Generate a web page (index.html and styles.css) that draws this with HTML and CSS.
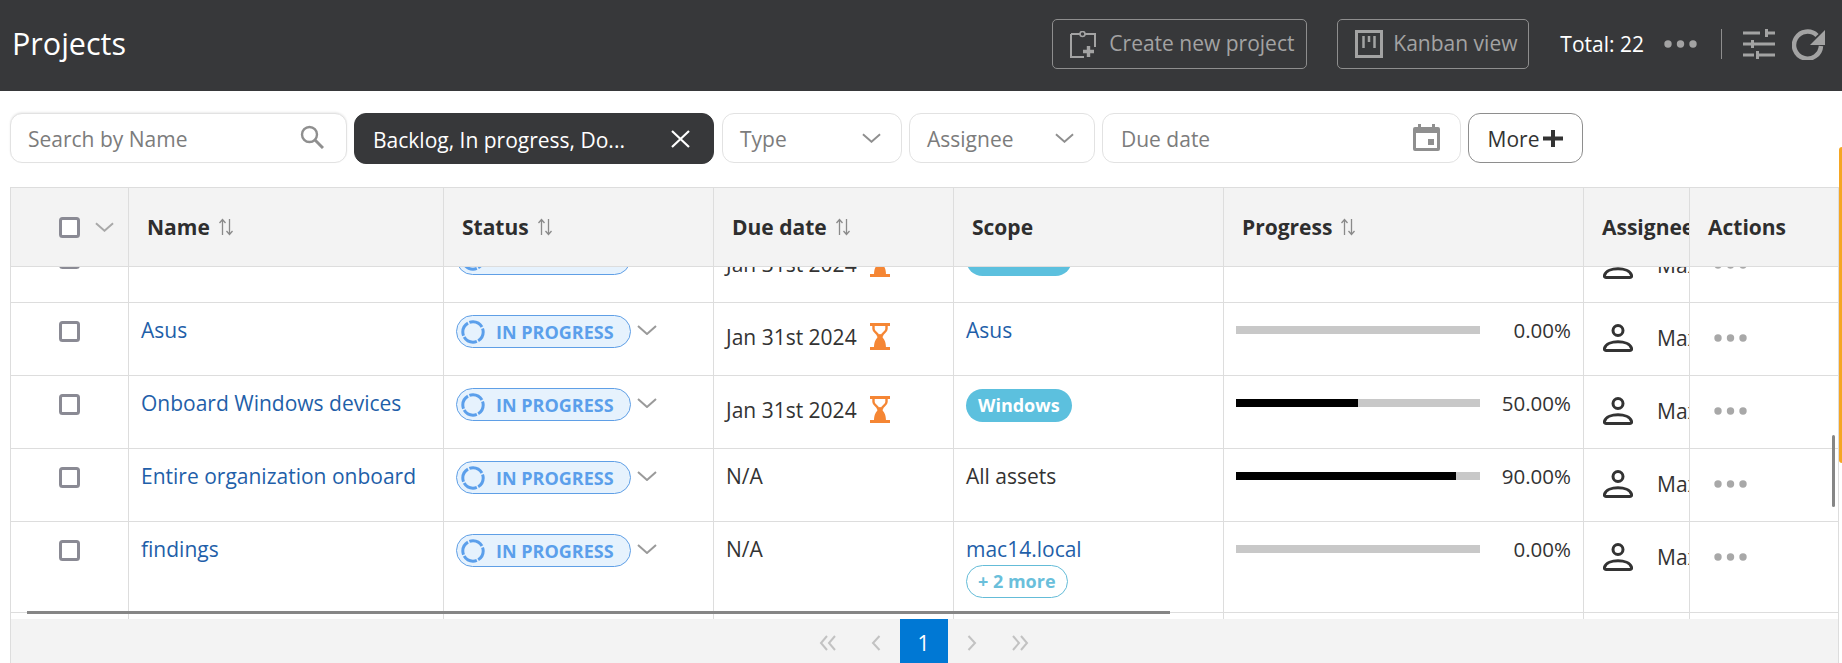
FILE: index.html
```html
<!DOCTYPE html>
<html lang="en">
<head>
<meta charset="utf-8">
<title>Projects</title>
<link rel="stylesheet" href="styles.css">
</head>
<body>
<svg class="defs" width="0" height="0" aria-hidden="true">
  <symbol id="i-chev" viewBox="0 0 20 10"><path d="M1 1l9 8 9-8" fill="none" stroke="currentColor" stroke-width="2"/></symbol>
  <symbol id="i-check" viewBox="0 0 21 21"><rect x="1.500" y="1.500" width="18" height="18" rx="2" fill="#fff" stroke="currentColor" stroke-width="3"/></symbol>
  <symbol id="i-sort" viewBox="0 0 16 18"><path d="M4.500 17V2M1.500 5l3-3.500 3 3.500M11.500 1v15M8.500 13l3 3.500 3-3.500" fill="none" stroke="currentColor" stroke-width="1.300"/></symbol>
  <symbol id="i-prog" viewBox="0 0 24 24"><circle cx="12" cy="12" r="10.200" fill="none" stroke="currentColor" stroke-width="3" stroke-dasharray="14.500 1.520" stroke-dashoffset="4"/></symbol>
  <symbol id="i-glass" viewBox="0 0 20 27"><path d="M0 0h20v3H0zM0 24h20v3H0z" fill="currentColor"/><path d="M3.500 2v4c0 3 4 4 4.500 6.500h4c.5-2.500 4.500-3.500 4.500-6.500V2" fill="none" stroke="currentColor" stroke-width="2.400"/><path d="M10 11.500c1.800 0 2 2 3 3.500 1.500 2 3 4 3 10H4c0-6 1.500-8 3-10 1-1.500 1.200-3.500 3-3.500z" fill="currentColor"/></symbol>
  <symbol id="i-user" viewBox="0 0 30 28"><circle cx="15" cy="6.500" r="5" fill="none" stroke="currentColor" stroke-width="3"/><path d="M3 26.500c-1.500 0-1.800-1-1.500-2.300C2.800 19.800 9 17.800 15 17.800s12.200 2 13.500 6.400c.3 1.300 0 2.300-1.500 2.300z" fill="none" stroke="currentColor" stroke-width="3"/></symbol>
  <symbol id="i-dots" viewBox="0 0 33 8"><circle cx="4" cy="4" r="3.700" fill="currentColor"/><circle cx="16.500" cy="4" r="3.700" fill="currentColor"/><circle cx="29" cy="4" r="3.700" fill="currentColor"/></symbol>
</svg>

<header class="topbar">
  <h1 class="title">Projects</h1>
  <div class="top-actions">
    <button class="ghost-btn create">
      <svg class="btn-ico" viewBox="0 0 26 27" width="26" height="27"><path d="M1 3h24v13M1 3v23h13" fill="none" stroke="currentColor" stroke-width="2"/><circle cx="12.500" cy="3" r="2.500" fill="#37383a" stroke="currentColor" stroke-width="1.600"/><path d="M18.500 15v11M13 20.500h11" fill="none" stroke="currentColor" stroke-width="3.400"/></svg>
      <span>Create new project</span>
    </button>
    <button class="ghost-btn kanban">
      <svg class="btn-ico" viewBox="0 0 28 28" width="28" height="28"><rect x="1.500" y="1.500" width="25" height="25" fill="none" stroke="currentColor" stroke-width="3"/><path d="M8.500 6v12M14 6v6M19.500 6v12" fill="none" stroke="currentColor" stroke-width="2.500"/></svg>
      <span>Kanban view</span>
    </button>
    <span class="total">Total: 22</span>
    <svg class="top-dots" width="33" height="8"><use href="#i-dots"/></svg>
    <span class="divider"></span>
    <svg class="sliders" viewBox="0 0 32 30" width="32" height="30"><path d="M0 4h17M25 4h7M0 15h8M11 15h21M0 26h11M16 26h16" fill="none" stroke="currentColor" stroke-width="3"/><path d="M23.500 0v8M9.500 11v8M14.500 22v8" fill="none" stroke="currentColor" stroke-width="3"/></svg>
    <svg class="refresh" viewBox="0 0 33 31" width="33" height="31"><path d="M25 6.500A13.500 13.500 0 1 0 29 17" fill="none" stroke="currentColor" stroke-width="4.500"/><path d="M33 1v15H18z" fill="currentColor"/></svg>
  </div>
</header>

<section class="filters">
  <div class="field search"><span>Search by Name</span>
    <svg viewBox="0 0 24 24" width="24" height="24"><circle cx="9.500" cy="9.500" r="7.500" fill="none" stroke="currentColor" stroke-width="2.400"/><path d="M15 15l8 8" stroke="currentColor" stroke-width="3"/></svg>
  </div>
  <div class="field chip"><span>Backlog, In progress, Do...</span>
    <svg viewBox="0 0 19 18" width="19" height="18"><path d="M1 1l17 16M18 1L1 17" stroke="currentColor" stroke-width="2.200"/></svg>
  </div>
  <div class="field type"><span>Type</span><svg class="chev" width="19" height="10"><use href="#i-chev"/></svg></div>
  <div class="field assignee"><span>Assignee</span><svg class="chev" width="19" height="10"><use href="#i-chev"/></svg></div>
  <div class="field due"><span>Due date</span>
    <svg viewBox="0 0 27 27" width="27" height="27"><path d="M5 0h3v3h11V0h3v3h3a2 2 0 0 1 2 2v20a2 2 0 0 1-2 2H2a2 2 0 0 1-2-2V5a2 2 0 0 1 2-2h3z" fill="currentColor"/><rect x="3" y="9" width="21" height="15" fill="#fff"/><rect x="15" y="15" width="6" height="6" fill="currentColor"/></svg>
  </div>
  <button class="more"><span>More</span><svg viewBox="0 0 20 17" width="20" height="17"><path d="M0 8.500h20M10 0v17" stroke="currentColor" stroke-width="4"/></svg></button>
</section>

<section class="table">
  <div class="row head">
    <div class="cell c-check">
      <svg class="check" width="21" height="21"><use href="#i-check"/></svg>
      <svg class="head-chev" width="19" height="10"><use href="#i-chev"/></svg>
    </div>
    <div class="cell">Name<svg class="sort" width="16" height="18"><use href="#i-sort"/></svg></div>
    <div class="cell">Status<svg class="sort" width="16" height="18"><use href="#i-sort"/></svg></div>
    <div class="cell">Due date<svg class="sort" width="16" height="18"><use href="#i-sort"/></svg></div>
    <div class="cell">Scope</div>
    <div class="cell">Progress<svg class="sort" width="16" height="18"><use href="#i-sort"/></svg></div>
    <div class="cell c-clip">Assignee</div>
    <div class="cell">Actions</div>
  </div>

  <div class="body">
    <div class="rows">
      <div class="row first">
        <div class="cell c-check"><svg class="check" width="21" height="21"><use href="#i-check"/></svg></div>
        <div class="cell c-name"><a>Onboard devices</a></div>
        <div class="cell c-status"><span class="pill"><svg width="24" height="24"><use href="#i-prog"/></svg>IN PROGRESS</span><svg class="chev" width="20" height="10"><use href="#i-chev"/></svg></div>
        <div class="cell c-date">Jan 31st 2024<svg class="glass" width="20" height="27"><use href="#i-glass"/></svg></div>
        <div class="cell c-scope"><span class="tag">Windows</span></div>
        <div class="cell c-progress"><div class="bar"><div class="fill"></div></div><span class="pct">0.00%</span></div>
        <div class="cell c-user"><svg width="30" height="28"><use href="#i-user"/></svg><span>Max</span></div>
        <div class="cell c-act"><svg width="33" height="8"><use href="#i-dots"/></svg></div>
      </div>

      <div class="row">
        <div class="cell c-check"><svg class="check" width="21" height="21"><use href="#i-check"/></svg></div>
        <div class="cell c-name"><a>Asus</a></div>
        <div class="cell c-status"><span class="pill"><svg width="24" height="24"><use href="#i-prog"/></svg>IN PROGRESS</span><svg class="chev" width="20" height="10"><use href="#i-chev"/></svg></div>
        <div class="cell c-date">Jan 31st 2024<svg class="glass" width="20" height="27"><use href="#i-glass"/></svg></div>
        <div class="cell c-scope"><a>Asus</a></div>
        <div class="cell c-progress"><div class="bar"><div class="fill"></div></div><span class="pct">0.00%</span></div>
        <div class="cell c-user"><svg width="30" height="28"><use href="#i-user"/></svg><span>Max</span></div>
        <div class="cell c-act"><svg width="33" height="8"><use href="#i-dots"/></svg></div>
      </div>

      <div class="row">
        <div class="cell c-check"><svg class="check" width="21" height="21"><use href="#i-check"/></svg></div>
        <div class="cell c-name"><a>Onboard Windows devices</a></div>
        <div class="cell c-status"><span class="pill"><svg width="24" height="24"><use href="#i-prog"/></svg>IN PROGRESS</span><svg class="chev" width="20" height="10"><use href="#i-chev"/></svg></div>
        <div class="cell c-date">Jan 31st 2024<svg class="glass" width="20" height="27"><use href="#i-glass"/></svg></div>
        <div class="cell c-scope"><span class="tag">Windows</span></div>
        <div class="cell c-progress"><div class="bar"><div class="fill" style="width:50%"></div></div><span class="pct">50.00%</span></div>
        <div class="cell c-user"><svg width="30" height="28"><use href="#i-user"/></svg><span>Max</span></div>
        <div class="cell c-act"><svg width="33" height="8"><use href="#i-dots"/></svg></div>
      </div>

      <div class="row">
        <div class="cell c-check"><svg class="check" width="21" height="21"><use href="#i-check"/></svg></div>
        <div class="cell c-name"><a>Entire organization onboard</a></div>
        <div class="cell c-status"><span class="pill"><svg width="24" height="24"><use href="#i-prog"/></svg>IN PROGRESS</span><svg class="chev" width="20" height="10"><use href="#i-chev"/></svg></div>
        <div class="cell c-date no-date">N/A</div>
        <div class="cell c-scope">All assets</div>
        <div class="cell c-progress"><div class="bar"><div class="fill" style="width:90%"></div></div><span class="pct">90.00%</span></div>
        <div class="cell c-user"><svg width="30" height="28"><use href="#i-user"/></svg><span>Max</span></div>
        <div class="cell c-act"><svg width="33" height="8"><use href="#i-dots"/></svg></div>
      </div>

      <div class="row tall">
        <div class="cell c-check"><svg class="check" width="21" height="21"><use href="#i-check"/></svg></div>
        <div class="cell c-name"><a>findings</a></div>
        <div class="cell c-status"><span class="pill"><svg width="24" height="24"><use href="#i-prog"/></svg>IN PROGRESS</span><svg class="chev" width="20" height="10"><use href="#i-chev"/></svg></div>
        <div class="cell c-date no-date">N/A</div>
        <div class="cell c-scope"><a>mac14.local</a><span class="more-tag">+ 2 more</span></div>
        <div class="cell c-progress"><div class="bar"><div class="fill"></div></div><span class="pct">0.00%</span></div>
        <div class="cell c-user"><svg width="30" height="28"><use href="#i-user"/></svg><span>Max</span></div>
        <div class="cell c-act"><svg width="33" height="8"><use href="#i-dots"/></svg></div>
      </div>

      <div class="row filler">
        <div class="cell"></div><div class="cell"></div><div class="cell"></div><div class="cell"></div>
        <div class="cell"></div><div class="cell"></div><div class="cell"></div><div class="cell"></div>
      </div>
    </div>
    <div class="hscroll"></div>
    <div class="vscroll"></div>
  </div>

  <footer class="pager">
    <span class="pg"><svg viewBox="0 0 18 16" width="18" height="16"><path d="M8 1L2 8l6 7M16 1l-6 7 6 7" fill="none" stroke="currentColor" stroke-width="2"/></svg></span>
    <span class="pg"><svg viewBox="0 0 10 16" width="10" height="16"><path d="M8.500 1L2 8l6.500 7" fill="none" stroke="currentColor" stroke-width="2"/></svg></span>
    <span class="pg current">1</span>
    <span class="pg"><svg viewBox="0 0 10 16" width="10" height="16"><path d="M1.500 1L8 8l-6.500 7" fill="none" stroke="currentColor" stroke-width="2"/></svg></span>
    <span class="pg"><svg viewBox="0 0 18 16" width="18" height="16"><path d="M2 1l6 7-6 7M10 1l6 7-6 7" fill="none" stroke="currentColor" stroke-width="2"/></svg></span>
  </footer>
</section>

<div class="edge-tab"></div>
</body>
</html>
```

FILE: styles.css
```css
* { box-sizing: border-box; }

html, body {
  margin: 0;
  height: 663px;
  overflow: hidden;
  background: #fff;
  font-family: "Open Sans", "Liberation Sans", sans-serif;
  font-size: 21px;
  color: #333;
}

.defs { position: absolute; }
svg { display: block; flex: none; }

/* Top bar */
.topbar {
  height: 91px;
  background: #37383a;
  display: flex;
  align-items: center;
  padding: 0 17px 3px 12px;
}
.title {
  margin: -3px 0 0;
  font-size: 30.5px;
  font-weight: 500;
  color: #fff;
}
.top-actions {
  margin-left: auto;
  display: flex;
  align-items: center;
  color: #a3a3a3;
}
.ghost-btn {
  height: 50px;
  display: flex;
  align-items: center;
  gap: 13px;
  background: transparent;
  border: 1px solid #8e8e8e;
  border-radius: 5px;
  color: #a3a3a3;
  font: 400 21px "Open Sans", sans-serif;
  white-space: nowrap;
  padding: 0 0 0 17px;
}
.ghost-btn span { margin-top: -2px; }
.ghost-btn.create { width: 255px; margin-right: 30px; }
.ghost-btn.kanban { width: 192px; margin-right: 31px; gap: 10px; }
.total { color: #fff; font-size: 21px; margin-right: 20px; white-space: nowrap; }
.divider { width: 1px; height: 30px; background: #8e8e8e; margin: 0 21px 0 24px; }
.refresh { margin-left: 17px; }

/* Filters */
.filters {
  display: flex;
  gap: 7px;
  padding: 22px 0 0 10px;
  height: 96px;
}
.field {
  height: 50px;
  display: flex;
  align-items: center;
  justify-content: space-between;
  background: #fff;
  border: 1px solid #e2e2e2;
  border-radius: 12px;
  color: #7c7c7c;
  padding: 0 20px 0 17px;
  white-space: nowrap;
}
.field span { margin-top: 2px; }
.field svg { color: #8f8f8f; }
.search { width: 337px; box-shadow: 0 -1px 2px rgba(0,0,0,.08); }
.search svg { margin: -2px 2px 0 0; }
.chip {
  width: 360px;
  background: #37383a;
  border-color: #37383a;
  color: #fff;
  padding: 0 23px 0 18px;
  height: 51px;
  margin-right: 1px;
}
.chip svg { color: #fff; }
.type { width: 180px; }
.assignee { width: 186px; }
.due { width: 359px; padding-right: 20px; padding-left: 18px; }
.due svg { margin-top: -2px; }
.more {
  width: 115px;
  height: 50px;
  display: flex;
  align-items: center;
  justify-content: center;
  gap: 4px;
  background: #fff;
  border: 1px solid #8e8e8e;
  border-radius: 12px;
  font: 400 21px "Open Sans", sans-serif;
  color: #333;
}
.more span { margin-top: 2px; }

/* Table */
.table {
  margin: 0 3px 0 10px;
  border-left: 1px solid #ddd;
  border-right: 1px solid #ddd;
}
.row {
  display: grid;
  grid-template-columns: 118px 315px 270px 240px 270px 360px 106px 148px;
  height: 73px;
  border-bottom: 1px solid #ddd;
}
.cell {
  border-right: 1px solid #ddd;
  display: flex;
  align-items: flex-start;
  padding: 16px 15px;
  min-width: 0;
  line-height: 24px;
}
.cell:last-child { border-right: 0; }

.head {
  height: 80px;
  background: #f3f3f3;
  border-top: 1px solid #ddd;
  font-weight: 700;
  font-size: 21px;
}
.head .cell { align-items: center; padding: 0 18px; color: #2e2e2e; white-space: nowrap; }
.head .c-check { padding: 0 0 0 48px; gap: 15px; }
.head .c-clip { overflow: hidden; padding-right: 0; }
.sort { color: #8a8a8a; margin-left: 8px; }
.head-chev { color: #a8a8a8; }
.check { color: #8a8a94; }

.body {
  position: relative;
  height: 352px;
  overflow: hidden;
}
.rows { margin-top: -37px; }
.c-check { padding: 18px 0 0 48px; }
.c-name { padding-left: 12px; padding-top: 15px; white-space: nowrap; }
a { color: #1f5fa9; }

.c-status { padding: 12px 0 0 12px; align-items: flex-start; }
.pill {
  width: 175px;
  height: 33px;
  display: flex;
  align-items: center;
  gap: 11px;
  padding-left: 4px;
  border: 1px solid #5f9fe6;
  border-radius: 17px;
  background: #e6f2fd;
  color: #5b9feb;
  font-size: 18px;
  font-weight: 700;
  line-height: 1;
  white-space: nowrap;
}
.c-status .chev { color: #9a9a9a; margin: 10px 0 0 6px; }

.c-date { padding: 21px 0 0 12px; line-height: 26px; white-space: nowrap; }
.no-date { padding-top: 15px; line-height: 24px; }
.glass { color: #f58634; margin: -1px 0 0 13px; }
.c-scope { padding: 15px 0 0 12px; flex-direction: column; align-items: flex-start; }
.tag {
  display: block;
  height: 33px;
  margin-top: -2px;
  padding: 0 12px;
  border-radius: 17px;
  background: #5cc0de;
  color: #fff;
  font-size: 18px;
  font-weight: 700;
  line-height: 33px;
}
.more-tag {
  display: block;
  height: 33px;
  margin-top: 4px;
  padding: 0 11px;
  border: 1px solid #64bcd8;
  border-radius: 17px;
  color: #6abfdb;
  font-size: 18px;
  font-weight: 700;
  line-height: 31px;
  white-space: nowrap;
}

.c-progress { padding: 23px 0 0 12px; position: relative; }
.bar { width: 244px; height: 8px; background: #c8c8c8; }
.fill { height: 100%; width: 0; background: #000; }
.pct { margin: -8px 12px 0 auto; font-size: 20.5px; }

.c-user { padding: 21px 0 0 19px; overflow: hidden; white-space: nowrap; color: #333; }
.c-user span { margin: 2px 0 0 24px; }
.c-act { padding: 31px 0 0 24px; color: #a8a8a8; }

.tall { height: 91px; }
.filler { height: 20px; border-bottom: 0; }
.filler .cell { padding: 0; }

.hscroll {
  position: absolute;
  left: 16px;
  top: 344px;
  width: 1143px;
  height: 3px;
  background: #868686;
}
.vscroll {
  position: absolute;
  right: 3px;
  top: 168px;
  width: 3px;
  height: 72px;
  background: #868686;
  border-radius: 2px;
}

.pager {
  height: 44px;
  background: #f3f3f3;
  display: flex;
  justify-content: center;
  padding-right: 2px;
  color: #c2c2c2;
}
.pg {
  width: 48px;
  display: flex;
  align-items: center;
  justify-content: center;
  padding-top: 4px;
}
.current { background: #0078d4; color: #fff; padding-top: 4px; }

.edge-tab {
  position: absolute;
  right: 0;
  top: 147px;
  width: 3px;
  height: 316px;
  background: #f5a623;
  border-radius: 3px 0 0 3px;
}
```
